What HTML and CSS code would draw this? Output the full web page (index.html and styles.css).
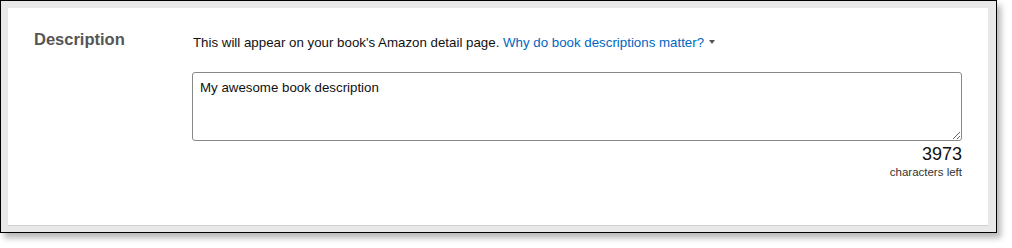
FILE: index.html
```html
<!DOCTYPE html>
<html lang="en">
<head>
    <meta charset="UTF-8">
    <title>Description</title>
    <link rel="stylesheet" href="styles.css">
</head>
<body>
    <div class="frame">
        <div class="panel">
            <div class="row">
                <div class="label">Description</div>
                <div class="field">
                    <p class="hint">This will appear on your book's Amazon detail page. <a href="#" class="more">Why do book descriptions matter?</a><span class="caret"></span></p>
                    <textarea class="desc">My awesome book description</textarea>
                    <div class="counter">
                        <span class="num">3973</span>
                        <span class="left">characters left</span>
                    </div>
                </div>
            </div>
        </div>
    </div>
</body>
</html>
```

FILE: styles.css
```css
/* 外框 */
body {
    margin: 0;
    min-height: 248px;
    background: #ffffff;
    font-family: "Liberation Sans", Arial, sans-serif;
    color: #111111;
}

.frame {
    width: 997px;
    height: 233px;
    box-sizing: border-box;
    border: 1px solid #000000;
    background-color: #e8e8e8;
    padding: 7px 8px 6px 7px;
    box-shadow: 4px 5px 6px rgba(0, 0, 0, 0.28);
}

/* 白色面板 */
.panel {
    height: 218px;
    box-sizing: border-box;
    background-color: #ffffff;
    border-bottom: 1px solid #d0d0d0;
    padding: 20px 26px 0 26px;
}

.row {
    display: flex;
}

.label {
    width: 158px;
    font-size: 16.5px;
    font-weight: bold;
    color: #555555;
    line-height: 20px;
    padding-top: 1px;
}

.field {
    flex: 1;
    display: flex;
    flex-direction: column;
}

/* 提示文字 */
.hint {
    margin: 6px 0 0 1px;
    font-size: 13.3px;
    line-height: 18px;
    color: #111111;
}

.more {
    color: #0066c0;
    text-decoration: none;
}

.caret {
    display: inline-block;
    margin-left: 5px;
    vertical-align: 3px;
    border-left: 3.5px solid transparent;
    border-right: 3.5px solid transparent;
    border-top: 4px solid #555555;
}

/* 文本框 */
.desc {
    margin-top: 20px;
    width: 770px;
    height: 69px;
    box-sizing: border-box;
    border: 1px solid #888888;
    border-radius: 3px;
    padding: 6px 7px;
    font-family: "Liberation Sans", Arial, sans-serif;
    font-size: 13.3px;
    line-height: 17px;
    color: #111111;
    resize: vertical;
}

.counter {
    width: 770px;
    display: flex;
    flex-direction: column;
    align-items: flex-end;
}

.num {
    font-size: 18px;
    line-height: 22px;
    margin-top: 2px;
    color: #111111;
}

.left {
    font-size: 11.5px;
    line-height: 14px;
    color: #333333;
    margin-top: 0;
}
```
